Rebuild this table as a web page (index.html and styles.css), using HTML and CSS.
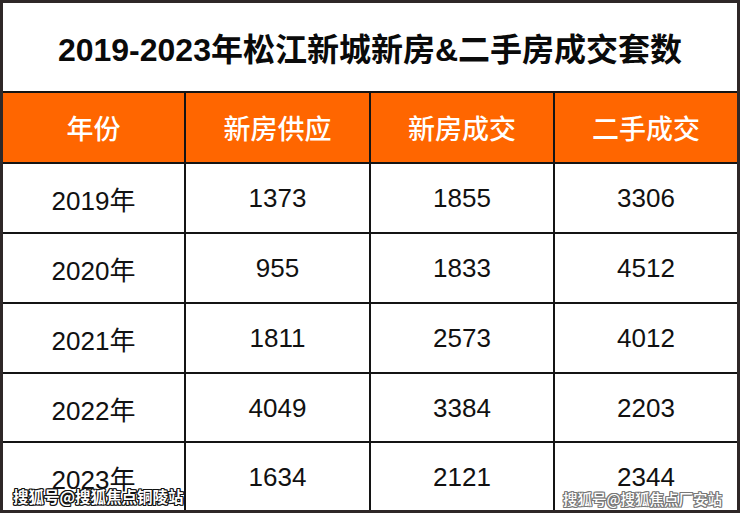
FILE: index.html
```html
<!DOCTYPE html>
<html lang="zh-CN">
<head>
<meta charset="utf-8">
<title>2019-2023年松江新城新房&二手房成交套数</title>
<link rel="stylesheet" href="styles.css">
</head>
<body>
<div class="sheet">
  <div class="grid">
    <div class="cell title">2019-2023年松江新城新房&amp;二手房成交套数</div>
    <div class="cell head">年份</div>
    <div class="cell head">新房供应</div>
    <div class="cell head">新房成交</div>
    <div class="cell head">二手成交</div>

    <div class="cell">2019年</div><div class="cell">1373</div><div class="cell">1855</div><div class="cell">3306</div>
    <div class="cell">2020年</div><div class="cell">955</div><div class="cell">1833</div><div class="cell">4512</div>
    <div class="cell">2021年</div><div class="cell">1811</div><div class="cell">2573</div><div class="cell">4012</div>
    <div class="cell">2022年</div><div class="cell">4049</div><div class="cell">3384</div><div class="cell">2203</div>
    <div class="cell">2023年</div><div class="cell">1634</div><div class="cell">2121</div><div class="cell">2344</div>
  </div>
  <div class="mark mark-left">搜狐号@搜狐焦点铜陵站</div>
  <div class="mark mark-right">搜狐号@搜狐焦点厂安站</div>
</div>
</body>
</html>
```
FILE: styles.css
```css
html, body {
  margin: 0;
  padding: 0;
  background: #ffffff;
}
.sheet {
  position: relative;
  width: 740px;
  height: 513px;
  box-sizing: border-box;
  border: 3px solid #2e2828;
  background: #141414;
}
.grid {
  display: grid;
  grid-template-columns: 181px 183px 182px 182px;
  grid-template-rows: 88px 69px 68px 68px 68px 67px 67px;
  gap: 2px;
  background: #141414;
  height: 100%;
}
.cell {
  display: flex;
  align-items: center;
  justify-content: center;
  background: #ffffff;
  color: #111111;
  font-family: "Liberation Sans", "Noto Sans CJK SC", sans-serif;
  font-size: 26px;
  padding-top: 1px;
  box-sizing: border-box;
}
.title {
  grid-column: 1 / 5;
  font-size: 32px;
  font-weight: 700;
  color: #0a0a0a;
  padding-top: 0;
}
.head {
  background: #ff6600;
  color: #ffffff;
  font-family: "Noto Sans CJK SC", sans-serif;
  font-size: 27px;
  font-weight: 500;
  padding-top: 0;
}
.mark {
  position: absolute;
  font-family: "Noto Sans CJK SC", sans-serif;
  font-weight: 700;
  color: #ffffff;
  line-height: 1;
  white-space: nowrap;
}
.mark-left {
  left: 10px;
  top: 486px;
  font-size: 15.5px;
  text-shadow: 1px 1px 0 #111, -1px -1px 0 #111, 1px -1px 0 #111, -1px 1px 0 #111, 0 1px 0 #111, 0 -1px 0 #111, 1px 0 0 #111, -1px 0 0 #111;
}
.mark-right {
  left: 560px;
  top: 489px;
  font-size: 14.5px;
  font-weight: 500;
  text-shadow: 1px 1px 0 #777, -1px -1px 0 #777, 1px -1px 0 #777, -1px 1px 0 #777, 0 1px 0 #777, 0 -1px 0 #777, 1px 0 0 #777, -1px 0 0 #777;
}
```
